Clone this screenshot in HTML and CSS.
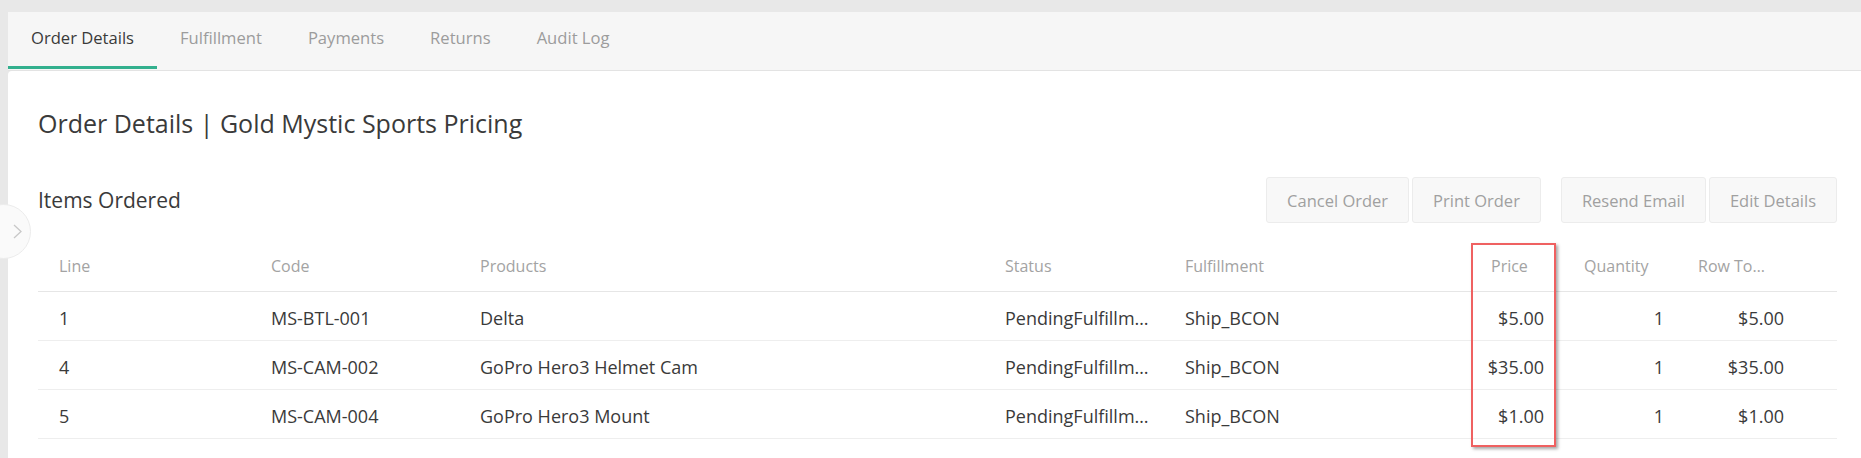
FILE: index.html
```
<!DOCTYPE html>
<html>
<head>
  <title>Order Details</title>
  <link rel="stylesheet" href="styles.css">
</head>
<body>
  <div class="page">
    <nav class="tabs">
      <a class="tab active" href="#">Order Details</a>
      <a class="tab" href="#">Fulfillment</a>
      <a class="tab" href="#">Payments</a>
      <a class="tab" href="#">Returns</a>
      <a class="tab" href="#">Audit Log</a>
    </nav>

    <div class="card">
      <button class="side-toggle">
        <svg width="55" height="55" viewBox="0 0 55 55"><path d="M38 21 L45 27.5 L38 34" fill="none" stroke="#c8c8c8" stroke-width="1.3"/></svg>
      </button>

      <h1 class="page-title">Order Details | Gold Mystic Sports Pricing</h1>

      <div class="section-head">
        <h2>Items Ordered</h2>
        <div class="actions">
          <div class="btn-group">
            <button class="btn">Cancel Order</button>
            <button class="btn">Print Order</button>
          </div>
          <div class="btn-group">
            <button class="btn">Resend Email</button>
            <button class="btn">Edit Details</button>
          </div>
        </div>
      </div>

      <div class="table-wrap">
        <table class="items">
          <colgroup>
            <col style="width:212px">
            <col style="width:209px">
            <col style="width:525px">
            <col style="width:180px">
            <col style="width:306px">
            <col style="width:93px">
            <col style="width:114px">
            <col style="width:128px">
            <col>
          </colgroup>
          <thead>
            <tr>
              <th>Line</th>
              <th>Code</th>
              <th>Products</th>
              <th>Status</th>
              <th>Fulfillment</th>
              <th>Price</th>
              <th>Quantity</th>
              <th class="total">Row Total</th>
              <th></th>
            </tr>
          </thead>
          <tbody>
            <tr>
              <td>1</td>
              <td>MS-BTL-001</td>
              <td>Delta</td>
              <td class="status">PendingFulfillment</td>
              <td>Ship_BCON</td>
              <td class="price">$5.00</td>
              <td class="qty">1</td>
              <td class="total">$5.00</td>
              <td></td>
            </tr>
            <tr>
              <td>4</td>
              <td>MS-CAM-002</td>
              <td>GoPro Hero3 Helmet Cam</td>
              <td class="status">PendingFulfillment</td>
              <td>Ship_BCON</td>
              <td class="price">$35.00</td>
              <td class="qty">1</td>
              <td class="total">$35.00</td>
              <td></td>
            </tr>
            <tr>
              <td>5</td>
              <td>MS-CAM-004</td>
              <td>GoPro Hero3 Mount</td>
              <td class="status">PendingFulfillment</td>
              <td>Ship_BCON</td>
              <td class="price">$1.00</td>
              <td class="qty">1</td>
              <td class="total">$1.00</td>
              <td></td>
            </tr>
          </tbody>
        </table>
        <div class="highlight"></div>
      </div>
    </div>
  </div>
</body>
</html>
```

FILE: styles.css
```
html, body { margin: 0; padding: 0; }

body
{
    background: #e8e8e8;
    font-family: "Open Sans", "Liberation Sans", sans-serif;
    color: #3a3a3a;
    overflow: hidden;
}

.page
{
    min-height: 100vh;
    box-sizing: border-box;
    padding: 12px 0 0 8px;
    display: flex;
    flex-direction: column;
}

/* tabs */
.tabs
{
    display: flex;
    height: 58px;
    background: #f6f6f6;
    border-bottom: 1px solid #e3e3e3;
}

.tab
{
    display: flex;
    align-items: center;
    padding: 0 23px 4px;
    font-size: 16.6px;
    color: #9c9c9c;
    text-decoration: none;
    border-bottom: 3px solid transparent;
    margin-bottom: 1px;
}

.tab.active
{
    color: #3a3a3a;
    border-bottom-color: #33b08e;
}

/* card */
.card
{
    flex: 1;
    position: relative;
    background: white;
    border-top-left-radius: 4px;
    padding: 35px 24px 0 30px;
}

.side-toggle
{
    position: absolute;
    left: -32px;
    top: 133px;
    width: 55px;
    height: 55px;
    padding: 0;
    border-radius: 50%;
    border: 1px solid #ececec;
    background: #fafafa;
}

.side-toggle svg { display: block; margin: -1px; }

.page-title
{
    margin: 0;
    font-size: 25px;
    font-weight: 400;
    line-height: 34px;
    color: #3a3a3a;
}

.section-head
{
    display: flex;
    align-items: center;
    justify-content: space-between;
    height: 46px;
    margin-top: 37px;
}

.section-head h2
{
    margin: 0;
    font-size: 21px;
    font-weight: 400;
    color: #3a3a3a;
}

.actions
{
    display: flex;
    gap: 20px;
}

.btn-group
{
    display: flex;
    gap: 3px;
}

.btn
{
    height: 46px;
    padding: 0 20px;
    font: 16.5px "Open Sans", "Liberation Sans", sans-serif;
    color: #a0a0a0;
    background: #f8f8f8;
    border: 1px solid #ececec;
    border-radius: 3px;
}

/* table */
.table-wrap
{
    position: relative;
    margin-top: 18px;
}

.items
{
    width: 100%;
    table-layout: fixed;
    border-collapse: collapse;
}

.items th, .items td
{
    padding: 0 21px;
    text-align: left;
    white-space: nowrap;
    overflow: hidden;
    text-overflow: ellipsis;
}

.items th
{
    height: 50px;
    font-size: 16px;
    font-weight: 400;
    color: #a3a3a3;
    border-bottom: 1px solid #e6e6e6;
}

.items td
{
    height: 45px;
    padding-top: 3px;
    font-size: 18px;
    color: #3a3a3a;
    border-bottom: 1px solid #eeeeee;
}

.items td.status { padding-right: 14px; }
.items td.price { text-align: right; padding-left: 8px; padding-right: 19px; overflow: visible; }
.items td.qty { text-align: right; padding-right: 13px; }
.items td.total { text-align: right; padding-right: 21px; }
.items th.total { padding-right: 37px; }

.highlight
{
    position: absolute;
    left: 1433px;
    top: 2px;
    width: 81px;
    height: 200px;
    border: 2px solid #ef6161;
    box-shadow: 2px 2px 3px rgba(0, 0, 0, 0.35);
}
```
